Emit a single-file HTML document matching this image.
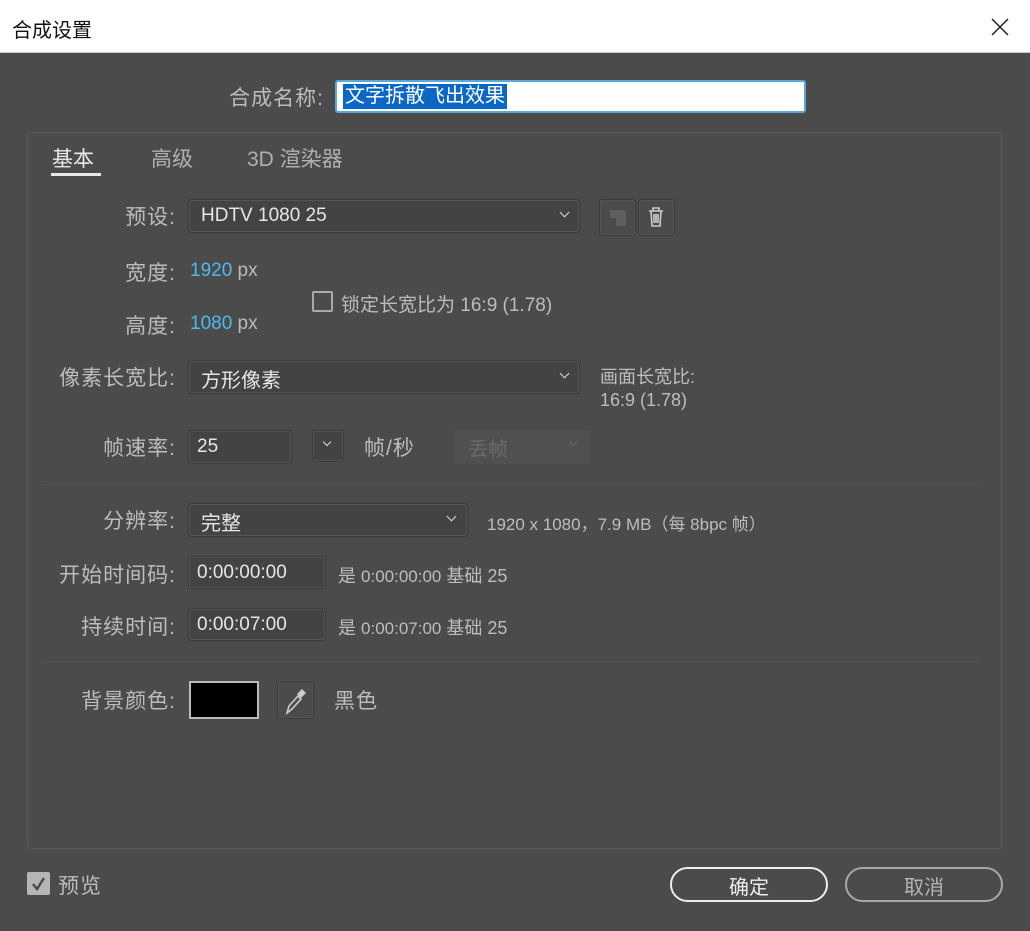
<!DOCTYPE html>
<html><head><meta charset="utf-8"><style>
*{margin:0;padding:0;box-sizing:border-box}
body{width:1030px;height:931px;background:#4b4b4b;font-family:"Liberation Sans","Noto Sans CJK SC",sans-serif;color:#bdbdbd;position:relative;overflow:hidden}
.a{position:absolute;white-space:nowrap}
.lbl{font-size:21px;color:#bcbcbc;letter-spacing:1px}
.r{position:absolute;white-space:nowrap;right:854px;font-size:21px;color:#bcbcbc;letter-spacing:1px}
.box{position:absolute;background:#434343;border:1px solid #3a3a3a;border-radius:3px;box-shadow:0 0 0 1px #555 inset}
.val{font-size:19px;color:#e6e6e6}
.chev{position:absolute;width:7px;height:7px;border-right:1.5px solid #ddd;border-bottom:1.5px solid #ddd;transform:rotate(45deg)}
.blue{color:#4fb8f0}
</style></head><body>
<div class="a" style="left:0;top:0;width:1030px;height:53px;background:#fff;border-bottom:1px solid #ccc"></div>
<div class="a" style="left:12px;top:14px;font-size:20px;color:#111">合成设置</div>
<svg class="a" style="left:991px;top:18px" width="18" height="18"><path d="M1 1L17 17M17 1L1 17" stroke="#222" stroke-width="1.5"/></svg>

<div class="r" style="right:706px;top:82px">合成名称:</div>
<div class="a" style="left:335px;top:80px;width:471px;height:33px;background:#fff;border:2px solid #5aa9dc;border-radius:3px"></div>
<div class="a" style="left:343px;top:84px;height:25px;background:#0a67c6;color:#fff;font-size:20px;padding:0 2px;line-height:25px">文字拆散飞出效果</div>

<div class="a" style="left:27px;top:132px;width:975px;height:717px;border:1px solid #5a5a5a;border-radius:3px"></div>
<div class="a" style="left:52px;top:143px;font-size:21px;color:#e8e8e8">基本</div>
<div class="a" style="left:51px;top:173px;width:50px;height:3px;background:#e8e8e8"></div>
<div class="a" style="left:151px;top:143px;font-size:21px;color:#b0b0b0">高级</div>
<div class="a" style="left:247px;top:143px;font-size:21px;color:#b0b0b0">3D 渲染器</div>

<div class="r" style="top:201px">预设:</div>
<div class="box" style="left:188px;top:199px;width:392px;height:34px"></div>
<div class="a val" style="left:201px;top:205px">HDTV 1080 25</div>
<div class="chev" style="left:561px;top:209px"></div>
<div class="box" style="left:599px;top:199px;width:37px;height:37px;background:#4b4b4b"></div>
<svg class="a" style="left:608px;top:208px" width="20" height="20"><path d="M2 2H18V18H8V10H2Z" fill="#5e5e5e"/></svg>
<div class="box" style="left:638px;top:199px;width:37px;height:37px;background:#4b4b4b"></div>
<svg class="a" style="left:646px;top:206px" width="20" height="22"><path d="M3 5H17M7 5V2H13V5M5 5L6 20H14L15 5M8 8V17M10 8V17M12 8V17" stroke="#ccc" stroke-width="1.6" fill="none"/></svg>

<div class="r" style="top:257px">宽度:</div>
<div class="a blue" style="left:190px;top:260px;font-size:19px">1920 <span style="color:#bbb">px</span></div>
<div class="r" style="top:310px">高度:</div>
<div class="a blue" style="left:190px;top:313px;font-size:19px">1080 <span style="color:#bbb">px</span></div>
<div class="a" style="left:312px;top:291px;width:21px;height:21px;border:2px solid #aaa;border-radius:2px"></div>
<div class="a" style="left:341px;top:290px;font-size:19px;color:#bcbcbc">锁定长宽比为 16:9 (1.78)</div>

<div class="r" style="top:362px">像素长宽比:</div>
<div class="box" style="left:188px;top:360px;width:392px;height:34px"></div>
<div class="a val" style="left:201px;top:364px;font-size:20px">方形像素</div>
<div class="chev" style="left:561px;top:370px"></div>
<div class="a" style="left:600px;top:363px;font-size:18px">画面长宽比:</div>
<div class="a" style="left:600px;top:390px;font-size:18px">16:9 (1.78)</div>

<div class="r" style="top:432px">帧速率:</div>
<div class="box" style="left:188px;top:430px;width:104px;height:34px"></div>
<div class="a val" style="left:197px;top:436px">25</div>
<div class="box" style="left:312px;top:430px;width:32px;height:32px"></div>
<div class="chev" style="left:324px;top:439px;width:6px;height:6px"></div>
<div class="a lbl" style="left:364px;top:432px">帧/秒</div>
<div class="a" style="left:454px;top:430px;width:137px;height:34px;background:#505050"></div>
<div class="a" style="left:468px;top:433px;font-size:20px;color:#6a6a6a">丢帧</div>
<div class="chev" style="left:570px;top:439px;border-color:#666;width:6px;height:6px"></div>

<div class="a" style="left:44px;top:484px;width:934px;height:1px;background:#555"></div>

<div class="r" style="top:505px">分辨率:</div>
<div class="box" style="left:188px;top:503px;width:280px;height:34px"></div>
<div class="a val" style="left:201px;top:507px;font-size:20px">完整</div>
<div class="chev" style="left:448px;top:513px"></div>
<div class="a" style="left:487px;top:510px;font-size:17px">1920 x 1080，7.9 MB（每 8bpc 帧）</div>

<div class="r" style="top:559px">开始时间码:</div>
<div class="box" style="left:188px;top:556px;width:138px;height:33px"></div>
<div class="a val" style="left:197px;top:562px">0:00:00:00</div>
<div class="a" style="left:338px;top:562px;font-size:18px">是 <span style="font-size:17px">0:00:00:00</span> 基础 25</div>

<div class="r" style="top:611px">持续时间:</div>
<div class="box" style="left:188px;top:608px;width:138px;height:33px"></div>
<div class="a val" style="left:197px;top:614px">0:00:07:00</div>
<div class="a" style="left:338px;top:614px;font-size:18px">是 <span style="font-size:17px">0:00:07:00</span> 基础 25</div>

<div class="a" style="left:44px;top:661px;width:934px;height:1px;background:#555"></div>

<div class="r" style="top:685px">背景颜色:</div>
<div class="a" style="left:189px;top:681px;width:70px;height:38px;background:#000;border:2px solid #bbb"></div>
<div class="box" style="left:277px;top:682px;width:37px;height:37px;background:#4b4b4b"></div>
<svg class="a" style="left:283px;top:686px" width="26" height="30"><path d="M4 27L6 20L15 10L18 13L9 23Z" stroke="#ccc" stroke-width="1.6" fill="none"/><path d="M14 8L19 3L23 7L18 12Z" fill="#ccc"/></svg>
<div class="a lbl" style="left:334px;top:685px">黑色</div>

<div class="a" style="left:27px;top:872px;width:23px;height:23px;background:#b5b5b5;border-radius:2px"></div>
<svg class="a" style="left:30px;top:875px" width="17" height="17"><path d="M3 9L7 14L14 3" stroke="#4b4b4b" stroke-width="2.5" fill="none"/></svg>
<div class="a lbl" style="left:58px;top:870px">预览</div>

<div class="a" style="left:670px;top:867px;width:158px;height:35px;border:2px solid #eee;border-radius:18px"></div>
<div class="a" style="left:670px;top:871px;width:158px;text-align:center;font-size:20px;color:#eee">确定</div>
<div class="a" style="left:845px;top:867px;width:158px;height:35px;border:2px solid #a8a8a8;border-radius:18px"></div>
<div class="a" style="left:845px;top:871px;width:158px;text-align:center;font-size:20px;color:#b5b5b5">取消</div>
</body></html>
